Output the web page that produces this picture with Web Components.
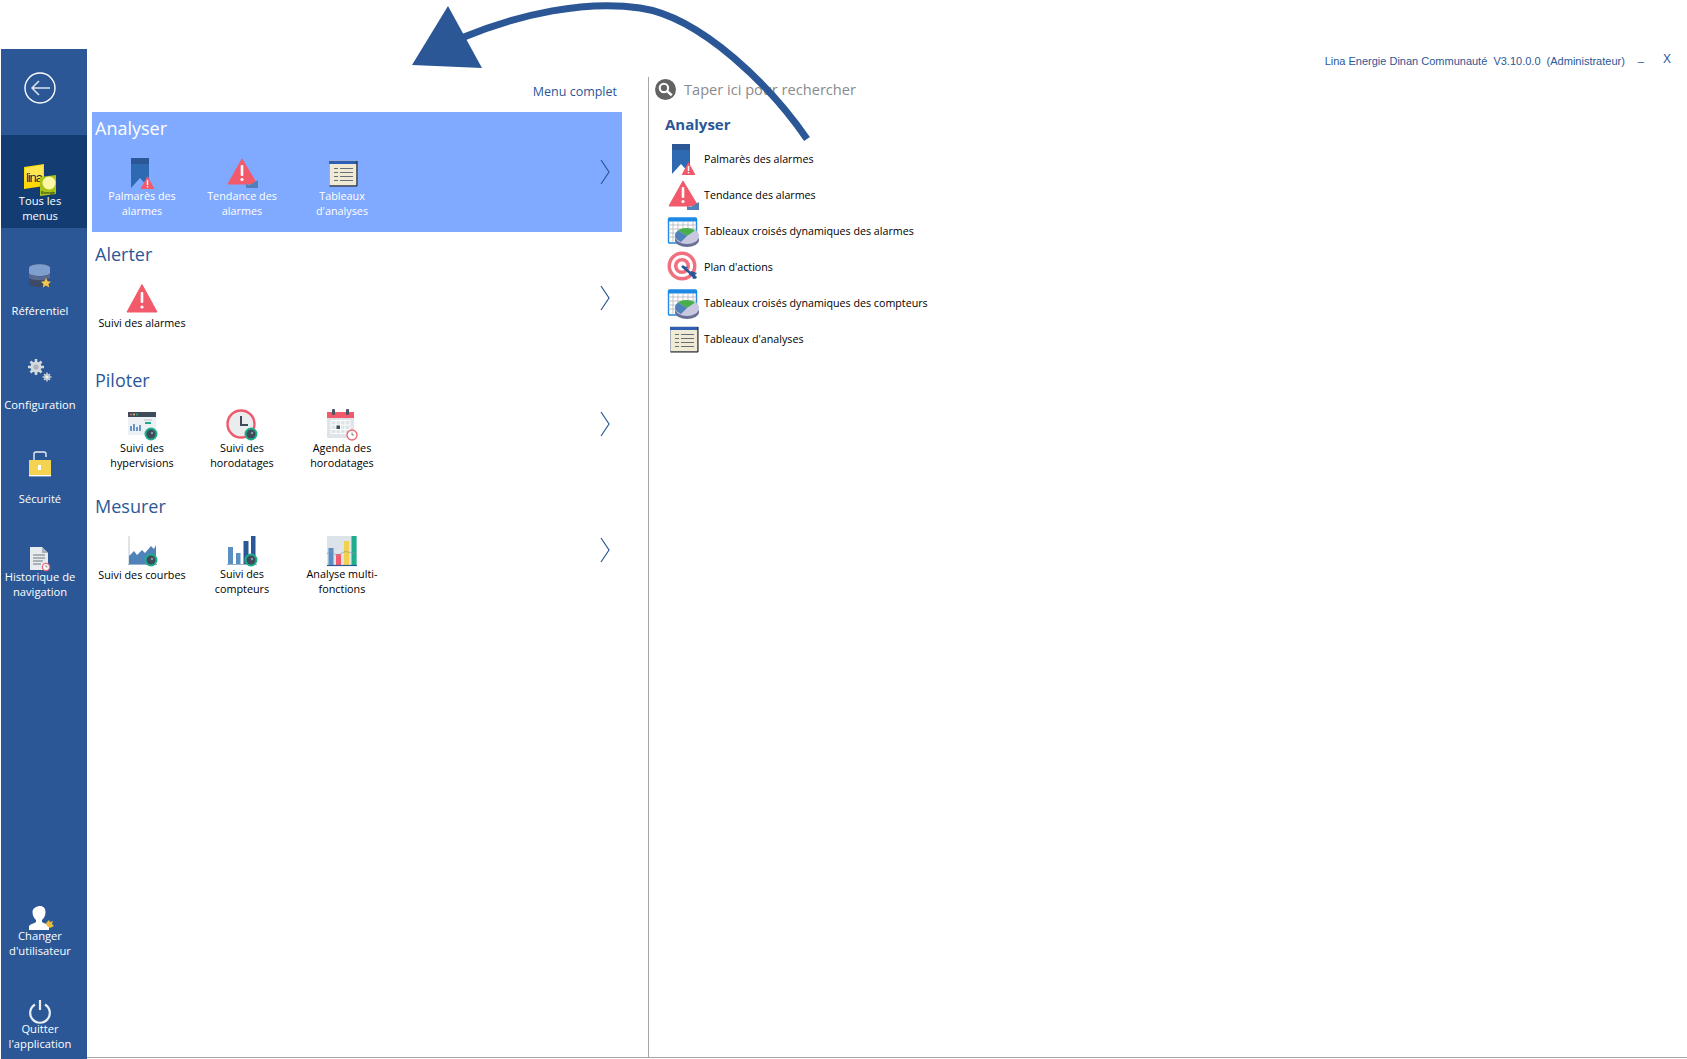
<!DOCTYPE html>
<html lang="fr">
<head>
<meta charset="utf-8">
<title>Lina Energie</title>
<style>
  html, body { margin: 0; height: 100%; background: white; overflow: hidden; }
  body { font-family: "Open Sans", "Noto Sans", sans-serif; }
</style>
</head>
<body>

<lina-app>
  <app-header slot="header"></app-header>

  <side-nav slot="nav">
    <side-item slot="top" icon="back" kind="back"></side-item>
    <side-item slot="top" icon="lina" gap="-4" active>Tous les<br>menus</side-item>
    <side-item slot="top" icon="database" gap="13">Référentiel</side-item>
    <side-item slot="top" icon="gears" gap="13">Configuration</side-item>
    <side-item slot="top" icon="lock" gap="13">Sécurité</side-item>
    <side-item slot="top" icon="history" gap="-3">Historique de<br>navigation</side-item>
    <side-item slot="bottom" icon="user" gap="-5">Changer<br>d'utilisateur</side-item>
    <side-item slot="bottom" icon="power" gap="-6">Quitter<br>l'application</side-item>
  </side-nav>

  <menu-panel slot="menu">
    <menu-section title="Analyser" active>
      <menu-tile icon="palmares">Palmarès des<br>alarmes</menu-tile>
      <menu-tile icon="tendance">Tendance des<br>alarmes</menu-tile>
      <menu-tile icon="tableau">Tableaux<br>d'analyses</menu-tile>
    </menu-section>
    <menu-section title="Alerter">
      <menu-tile icon="alert" single>Suivi des alarmes</menu-tile>
    </menu-section>
    <menu-section title="Piloter">
      <menu-tile icon="hyper">Suivi des<br>hypervisions</menu-tile>
      <menu-tile icon="clock">Suivi des<br>horodatages</menu-tile>
      <menu-tile icon="agenda">Agenda des<br>horodatages</menu-tile>
    </menu-section>
    <menu-section title="Mesurer">
      <menu-tile icon="courbes" single>Suivi des courbes</menu-tile>
      <menu-tile icon="compteurs">Suivi des<br>compteurs</menu-tile>
      <menu-tile icon="multi">Analyse multi-<br>fonctions</menu-tile>
    </menu-section>
  </menu-panel>

  <search-panel slot="search" heading="Analyser">
    <result-row icon="palmares">Palmarès des alarmes</result-row>
    <result-row icon="tendance">Tendance des alarmes</result-row>
    <result-row icon="pivot">Tableaux croisés dynamiques des alarmes</result-row>
    <result-row icon="target">Plan d'actions</result-row>
    <result-row icon="pivot">Tableaux croisés dynamiques des compteurs</result-row>
    <result-row icon="tableau">Tableaux d'analyses</result-row>
  </search-panel>

  <curved-arrow slot="overlay"></curved-arrow>
</lina-app>

<script>
const LENS = `<circle cx="25" cy="25" r="6.500" fill="#1fae8b"/><circle cx="25" cy="25" r="4.500" fill="#3d4b5a"/><circle cx="26" cy="24" r="1.200" fill="#8b98a5"/>`;

const ICONS = {
  back: `<circle cx="16" cy="16" r="15" fill="none" stroke="#fff" stroke-width="1.400"/><path d="M26 16H8M15 9l-7 7 7 7" fill="none" stroke="#dfe3ec" stroke-width="1.500"/>`,
  lina: `<path d="M0 2l20-3v22L0 24z" fill="#ffd800"/><path d="M1 3l18-3v13L1 17z" fill="#fff2a0" opacity=".5"/>
    <text x="2" y="17" font-family="Liberation Sans, sans-serif" font-size="13" fill="#1a2b45" textLength="17">lina</text>
    <path d="M16 12l16-2v19l-16 2z" fill="#a9c417"/><circle cx="25" cy="18" r="6.500" fill="#fff7a8"/><text x="17" y="29" font-family="Liberation Sans, sans-serif" font-size="4" font-weight="700" fill="#2f4a10" textLength="14">Energie</text>`,
  database: `<path d="M5 10c0-5 21-5 21 0v16c0 4-21 4-21 0z" fill="#3f4a66"/><path d="M5 10c0-5 21-5 21 0v5c0 4-21 4-21 0z" fill="#7e9fce"/><path d="M5 16c4 3 17 3 21 0v4c-4 3-17 3-21 0z" fill="#59688f"/><path d="M22 20l1.600 3.300 3.400.400-2.500 2.300.700 3.400-3.200-1.800-3.200 1.800.700-3.400-2.500-2.300 3.400-.400z" fill="#f2c94c"/>`,
  gears: `<g fill="#d3d9dd"><circle cx="12" cy="15" r="5.500"/><g stroke="#d3d9dd" stroke-width="2.600"><path d="M12 7v16M4 15h16M6.500 9.500l11 11M17.500 9.500l-11 11"/></g></g><circle cx="12" cy="15" r="2.600" fill="#aab4bd"/>
    <g fill="#c5ccd2"><circle cx="23" cy="25" r="3"/><g stroke="#c5ccd2" stroke-width="1.600"><path d="M23 20.500v9M18.500 25h9M20 22l6 6M26 22l-6 6"/></g></g><circle cx="23" cy="25" r="1.300" fill="#eef0f2"/>`,
  lock: `<path d="M10 14V8c0-1 1-2 2-2h8c1 0 2 1 2 2v3" fill="none" stroke="#eaeef2" stroke-width="1.400"/><rect x="5" y="14" width="22" height="15" fill="#f5d352"/><rect x="5" y="29" width="22" height="1.400" fill="#fff"/><rect x="14" y="19" width="3" height="5" fill="#fff"/>`,
  history: `<path d="M6 7h12l6 6v17H6z" fill="#e7eaee"/><path d="M18 7l6 6h-6z" fill="#a9b2bb"/><path d="M9 15h12M9 18h12M9 21h10M9 24h8" stroke="#6e7883" stroke-width="1"/><circle cx="22" cy="27" r="3.600" fill="#fff" stroke="#ee6a78" stroke-width="1.300"/><path d="M22 25v2h1.600" fill="none" stroke="#666" stroke-width=".7"/>`,
  user: `<path d="M16 5c3.500 0 5.500 2.500 5.500 6s-1.500 6.500-3.500 8v2c2.500 1.500 5 1.500 7 4v4H5v-4c2-2.500 5-2.500 7-4v-2c-2-1.500-3.500-4.500-3.500-8s4-6 7.500-6z" fill="#fff"/><path d="M22 22l3-3 1 2 3-1-1 3 2 2-4 2-3-2z" fill="#e8b93a"/>`,
  power: `<path d="M11 9.500a9.800 9.800 0 1 0 10 0" fill="none" stroke="#e9edf2" stroke-width="2.200"/><path d="M16 5v10" stroke="#e9edf2" stroke-width="2.200"/>`,
  palmares: `<path d="M5 1h18v30l-9-10-9 10z" fill="#2e6ab1"/><rect x="5" y="1" width="18" height="6" fill="#2b5797"/><path d="M21.500 19l7 13h-14z" fill="#f25a6c"/><rect x="20.800" y="23" width="1.400" height="5" fill="#fff"/><rect x="20.800" y="29" width="1.400" height="1.400" fill="#fff"/>`,
  alert: `<path d="M16 1.500L31 29H1z" fill="#f25a6c" stroke="#f25a6c" stroke-linejoin="round"/><rect x="14.700" y="9" width="2.600" height="11" rx="1" fill="#fff"/><circle cx="16" cy="24" r="1.600" fill="#fff"/>`,
  tendance: `<path d="M16 2L31 27H2z" fill="#f25a6c" stroke="#f25a6c" stroke-linejoin="round"/><rect x="14.700" y="8" width="2.600" height="11" rx="1" fill="#fff"/><circle cx="16" cy="22.500" r="1.600" fill="#fff"/><path d="M20 22v5l4 1 8-5v8H20z" fill="#4f82b8"/>`,
  tableau: `<rect x="3.500" y="4" width="27" height="24.500" fill="#efead4" stroke="#a8aeb6"/><rect x="3" y="4" width="28" height="3" fill="#2e5fb4"/><path d="M31 4v25H3.500" fill="none" stroke="#1b1b1b" stroke-width="1"/><path d="M8 11.500h4M14 11.500h13M8 15.500h4M14 15.500h13M8 19.500h4M14 19.500h13M8 23.500h4M14 23.500h13" stroke="#5a616c" stroke-width=".9"/>`,
  hyper: `<rect x="2" y="3" width="28" height="23" fill="#eef1f3"/><rect x="2" y="3" width="28" height="5" fill="#3d4b5a"/><circle cx="5" cy="5.500" r="1" fill="#f25a6c"/><circle cx="8" cy="5.500" r="1" fill="#f2c94c"/><circle cx="11" cy="5.500" r="1" fill="#1fae8b"/><path d="M5 22v-5M8 22v-7M11 22v-4M14 22v-6" stroke="#5a8cc0" stroke-width="1.800"/><path d="M19 14h6" stroke="#1fae8b" stroke-width="2"/><path d="M18 11h8" stroke="#b9c4cd" stroke-width="1"/>${LENS}`,
  clock: `<circle cx="15" cy="15" r="13.500" fill="#ebecee" stroke="#ee5a6c" stroke-width="2.400"/><path d="M15 7v9h7" fill="none" stroke="#3d4b5a" stroke-width="2"/>${LENS}`,
  agenda: `<rect x="1" y="5" width="27" height="24" fill="#dfe4e8"/><rect x="1" y="3" width="27" height="6" fill="#f25a6c"/><rect x="6" y="0" width="3" height="6" rx="1" fill="#4a5766"/><rect x="20" y="0" width="3" height="6" rx="1" fill="#4a5766"/><path d="M5 11.500h19v13H5zM5 16h19M5 20.500h19M10 11.500v13M14.500 11.500v13M19 11.500v13" fill="none" stroke="#fff" stroke-width=".9"/><rect x="10.500" y="16.500" width="3.500" height="3.500" fill="#3d4b5a"/><circle cx="26" cy="26" r="5" fill="#fff" stroke="#ee6a78" stroke-width="1.400"/><path d="M26 23.500V26h2" fill="none" stroke="#666" stroke-width=".8"/>`,
  courbes: `<path d="M3 1v28" stroke="#d5dbe0" stroke-width="1.500"/><path d="M3 29v-8l5-5 3 4 5-5 3 3 6-7 3 3 2-4v19z" fill="#4f82b8"/><path d="M2 29.500h29" stroke="#9ab2c8" stroke-width="1"/>${LENS}`,
  compteurs: `<rect x="2" y="12" width="5" height="17" fill="#5a8fc4"/><rect x="10" y="18" width="4.500" height="11" fill="#5a8fc4"/><rect x="17.500" y="6" width="5" height="23" fill="#2b5797"/><rect x="25" y="1" width="4.500" height="28" fill="#2b5797"/><path d="M1 29.500h30" stroke="#9ab2c8"/>${LENS}`,
  multi: `<rect x="1" y="1" width="30" height="29" fill="#dce4ea"/><rect x="2.500" y="13" width="5" height="17" fill="#5a8fc4"/><rect x="10" y="19" width="5" height="11" fill="#f25a6c"/><rect x="18" y="6" width="5" height="24" fill="#f2d14f"/><rect x="25.500" y="1" width="5" height="29" fill="#1fae8b"/><path d="M1 19c5-8 7 4 12 1s5-4 9-3 5 2 9 0" fill="none" stroke="#8c97a3" stroke-width=".7"/><path d="M1 30.500h30" stroke="#2b5797" stroke-width="1.200"/>`,
  pivot: `<rect x="1.500" y="3" width="28" height="25" rx="1" fill="#fff" stroke="#1e88e5" stroke-width="1.400"/><rect x="1.500" y="3" width="28" height="3.500" fill="#1e88e5"/><path d="M1.500 10h28M1.500 14h28M1.500 18h28M1.500 22h28M6 6.500v21M11 6.500v21M16 6.500v21M21 6.500v21M26 6.500v21" stroke="#a9aeb9" stroke-width=".7"/><ellipse cx="20" cy="25" rx="12" ry="7" fill="#696f95"/><ellipse cx="20" cy="21" rx="12" ry="8" fill="#c8c9e0"/><path d="M20 21L11 15.500C14 12 25 12 28 15.500z" fill="#46b04a"/><path d="M20 21L11 15.500C9 17 8 19 8 21C8 23 10 25 14 27z" fill="#4f82b8"/>`,
  target: `<circle cx="15" cy="15" r="14.500" fill="#f0707f"/><circle cx="15" cy="15" r="11" fill="#fff"/><circle cx="15" cy="15" r="8" fill="#f0707f"/><circle cx="15" cy="15" r="4.500" fill="#fff"/><path d="M15 15l14 12" stroke="#2b5797" stroke-width="2.500"/><path d="M15 15l6 1-3 3z" fill="#2b5797"/><path d="M24 20l6 2-2 2 2 3-4 1-1-3-3-1z" fill="#2b5797"/>`,
  search: `<circle cx="10" cy="10" r="10" fill="#636363"/><circle cx="8.500" cy="8.500" r="4" fill="none" stroke="#fff" stroke-width="2"/><path d="M11.500 11.500l4.500 4" stroke="#fff" stroke-width="2.400"/>`,
};

class AppIcon extends HTMLElement {
  connectedCallback() {
    const name = this.getAttribute("name");
    const size = this.getAttribute("size") || 32;
    const box = name === "search" ? "0 0 20 20" : "0 0 32 32";
    this.attachShadow({ mode: "open" }).innerHTML = `
      <style>
        :host { display: block; flex: none; width: ${size}px; height: ${size}px; }
        svg { display: block; width: 100%; height: 100%; overflow: visible; }
      </style>
      <svg viewBox="${box}">${ICONS[name] || ""}</svg>
    `;
  }
}

class LinaApp extends HTMLElement {
  constructor() {
    super();
    this.attachShadow({ mode: "open" }).innerHTML = `
      <style>
        :host { display: flex; flex-direction: column; height: 1059px; position: relative; overflow: hidden; }
        .main { flex: 1; display: flex; min-height: 0; margin-left: 1px; }
        .content { flex: 1; display: flex; min-width: 0; margin-bottom: 1px; border-bottom: 1px solid #a6a6a6; }
      </style>
      <slot name="header"></slot>
      <div class="main">
        <slot name="nav"></slot>
        <div class="content">
          <slot name="menu"></slot>
          <slot name="search"></slot>
        </div>
      </div>
      <slot name="overlay"></slot>
    `;
  }
}

class AppHeader extends HTMLElement {
  constructor() {
    super();
    this.attachShadow({ mode: "open" }).innerHTML = `
      <style>
        :host {
          display: block;
          flex: none;
          height: 49px;
          font-family: "Liberation Sans", sans-serif;
          font-size: 11px;
          line-height: 16px;
          color: #2b5797;
        }
        .bar { display: flex; justify-content: flex-end; padding: 53px 16px 0 0; }
        .title { white-space: pre; }
        .min { margin-left: 13px; }
        .close { margin-left: 19px; margin-top: -2px; font-size: 12px; }
      </style>
      <div class="bar">
        <span class="title">Lina Energie Dinan Communauté  V3.10.0.0  (Administrateur)</span>
        <span class="min">–</span>
        <span class="close">X</span>
      </div>
    `;
  }
}

class SideNav extends HTMLElement {
  constructor() {
    super();
    this.attachShadow({ mode: "open" }).innerHTML = `
      <style>
        :host {
          display: flex;
          flex-direction: column;
          justify-content: space-between;
          flex: 0 0 86px;
          width: 86px;
          background: #2b5797;
        }
        .group { display: flex; flex-direction: column; }
      </style>
      <div class="group"><slot name="top"></slot></div>
      <div class="group"><slot name="bottom"></slot></div>
    `;
  }
}

class SideItem extends HTMLElement {
  constructor() {
    super();
    this.attachShadow({ mode: "open" });
  }
  connectedCallback() {
    const icon = this.getAttribute("icon");
    const gap = this.getAttribute("gap") || 0;
    this.shadowRoot.innerHTML = `
      <style>
        :host {
          display: flex;
          flex-direction: column;
          align-items: center;
          box-sizing: border-box;
          height: 94px;
          width: 86px;
          padding: 30px 8px 0 0;
          color: white;
          font-size: 11.200px;
          line-height: 15px;
          text-align: center;
        }
        :host([active]) { background: #123c72; height: 93px; }
        :host([kind="back"]) { height: 86px; padding-top: 23px; }
        .label { margin-top: ${gap}px; white-space: nowrap; }
      </style>
      <app-icon name="${icon}"></app-icon>
      <div class="label"><slot></slot></div>
    `;
  }
}

class MenuPanel extends HTMLElement {
  constructor() {
    super();
    this.attachShadow({ mode: "open" }).innerHTML = `
      <style>
        :host {
          display: block;
          flex: 0 0 561px;
          box-sizing: border-box;
          padding: 0 26px 0 5px;
        }
        .top {
          height: 63px;
          display: flex;
          justify-content: flex-end;
          align-items: flex-start;
          padding: 34px 5px 0 0;
          box-sizing: border-box;
          font-size: 12.500px;
          line-height: 18px;
          color: #2b5797;
        }
        .sections { display: flex; flex-direction: column; gap: 6px; }
      </style>
      <div class="top">Menu complet</div>
      <div class="sections"><slot></slot></div>
    `;
  }
}

class MenuSection extends HTMLElement {
  constructor() {
    super();
    this.attachShadow({ mode: "open" });
  }
  connectedCallback() {
    this.shadowRoot.innerHTML = `
      <style>
        :host {
          display: grid;
          grid-template-columns: 1fr auto;
          grid-template-rows: 44px 76px;
          height: 120px;
          padding-right: 12px;
          color: black;
        }
        :host([active]) { background: #7faaff; color: white; }
        h2 {
          grid-column: 1 / 3;
          margin: 0;
          padding-left: 3px;
          font-size: 18px;
          font-weight: 400;
          line-height: 32px;
          color: #2b5797;
        }
        :host([active]) h2 { color: white; }
        .tiles { display: flex; }
        svg { display: block; width: 10px; height: 26px; margin-top: 3px; }
      </style>
      <h2>${this.getAttribute("title")}</h2>
      <div class="tiles"><slot></slot></div>
      <svg viewBox="0 0 10 26"><path d="M1 1l8 12-8 12" fill="none" stroke="#2b5797" stroke-width="1.200"/></svg>
    `;
  }
}

class MenuTile extends HTMLElement {
  constructor() {
    super();
    this.attachShadow({ mode: "open" });
  }
  connectedCallback() {
    this.shadowRoot.innerHTML = `
      <style>
        :host {
          display: flex;
          flex-direction: column;
          align-items: center;
          box-sizing: border-box;
          width: 100px;
          padding-top: 1px;
          font-size: 10.800px;
          line-height: 15px;
          text-align: center;
          white-space: nowrap;
        }
        .label { margin-top: -1px; }
        :host([single]) .label { margin-top: 0; }
      </style>
      <app-icon name="${this.getAttribute("icon")}"></app-icon>
      <div class="label"><slot></slot></div>
    `;
  }
}

class SearchPanel extends HTMLElement {
  constructor() {
    super();
    this.attachShadow({ mode: "open" });
  }
  connectedCallback() {
    this.shadowRoot.innerHTML = `
      <style>
        :host {
          display: block;
          flex: 1;
          margin-top: 28px;
          padding-left: 6px;
          border-left: 1px solid #a6a6a6;
        }
        .search { display: flex; align-items: center; gap: 8px; height: 25px; font-size: 14.600px; color: #8a8a8a; }
        .search span { margin-top: -1px; }
        .body { padding-left: 10px; }
        h3 { margin: 11px 0 6px; font-size: 15px; line-height: 22px; font-weight: 700; color: #2b5797; }
        .rows { display: flex; flex-direction: column; padding-left: 1px; }
      </style>
      <div class="search"><app-icon name="search" size="21"></app-icon><span>Taper ici pour rechercher</span></div>
      <div class="body">
        <h3>${this.getAttribute("heading")}</h3>
        <div class="rows"><slot></slot></div>
      </div>
    `;
  }
}

class ResultRow extends HTMLElement {
  constructor() {
    super();
    this.attachShadow({ mode: "open" });
  }
  connectedCallback() {
    this.shadowRoot.innerHTML = `
      <style>
        :host {
          display: flex;
          align-items: center;
          gap: 5px;
          height: 36px;
          padding-left: 1px;
          font-size: 10.700px;
          color: black;
          white-space: nowrap;
        }
      </style>
      <app-icon name="${this.getAttribute("icon")}"></app-icon>
      <span><slot></slot></span>
    `;
  }
}

// the big annotation arrow lies over the page
class CurvedArrow extends HTMLElement {
  constructor() {
    super();
    this.attachShadow({ mode: "open" }).innerHTML = `
      <style>
        :host { position: absolute; inset: 0; pointer-events: none; }
        svg { display: block; width: 100%; height: 100%; }
      </style>
      <svg viewBox="0 0 1687 1059">
        <path d="M464 37C520 14 585 0 640 8C702 17 772 88 807 139" fill="none" stroke="#2b5797" stroke-width="7"/>
        <path d="M448 6L412 65L482 68Z" fill="#2b5797"/>
      </svg>
    `;
  }
}

customElements.define("app-icon", AppIcon);
customElements.define("lina-app", LinaApp);
customElements.define("app-header", AppHeader);
customElements.define("side-nav", SideNav);
customElements.define("side-item", SideItem);
customElements.define("menu-panel", MenuPanel);
customElements.define("menu-section", MenuSection);
customElements.define("menu-tile", MenuTile);
customElements.define("search-panel", SearchPanel);
customElements.define("result-row", ResultRow);
customElements.define("curved-arrow", CurvedArrow);
</script>
</body>
</html>
